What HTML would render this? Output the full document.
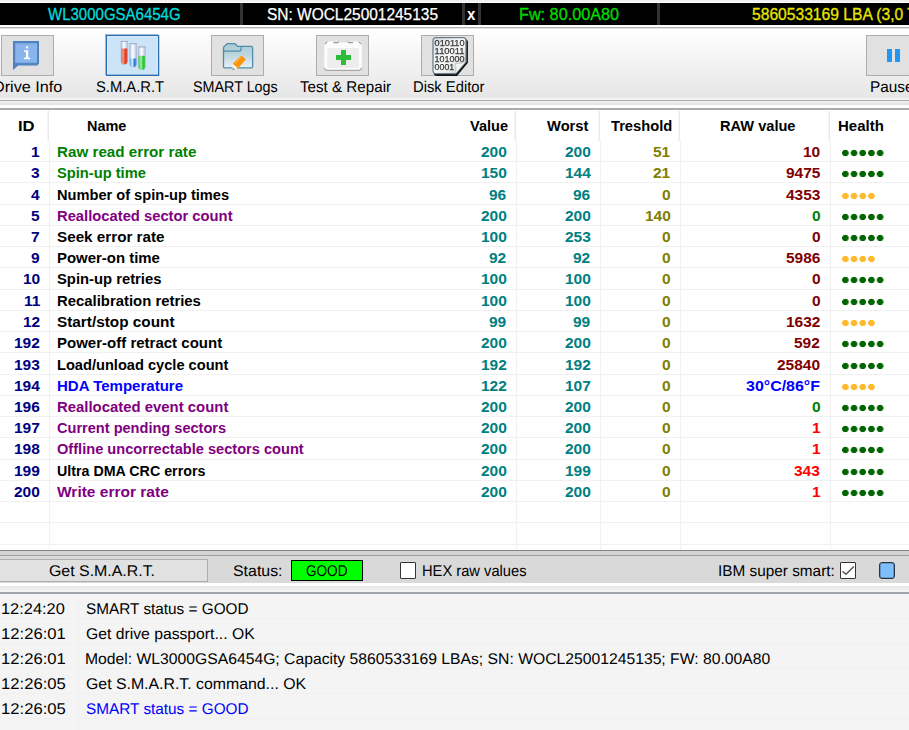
<!DOCTYPE html>
<html><head><meta charset="utf-8"><title>Victoria SMART</title>
<style>
html,body{margin:0;padding:0}
body{width:909px;height:730px;overflow:hidden;position:relative;background:#f0f0f0;font-family:"Liberation Sans",sans-serif}
#w{position:absolute;left:0;top:0;width:909px;height:730px;overflow:hidden}
#w>*{position:absolute}
.t{position:absolute;white-space:pre;line-height:20px;height:20px;transform-origin:0 0}
.g{text-rendering:geometricPrecision}
.r{position:absolute}
.sep{top:3px;height:22px;background:#333}
.btn{top:35px;width:51px;height:39px;background:#e1e1e1;border:1px solid #adadad}
.hs{top:111px;width:1px;height:30px;background:#e8e8e8;box-shadow:-1px 0 0 #f6f6f6}
.bs{top:141px;width:1px;height:409px;background:#f1f1f1}
.hl{left:0;width:909px;height:1px;background:#f1f1f1}
.ll{left:0;width:909px;height:1px;background:#f0f0f0}
.d{position:absolute;left:841.3px;height:8px;background-size:8.7px 8px;background-repeat:repeat-x}
svg{position:absolute;overflow:visible}
</style></head><body><div id="w">
<!-- top strip -->
<div class="r" style="left:0;top:2px;width:909px;height:1px;background:#fff"></div>
<div class="r" style="left:0;top:3px;width:909px;height:22px;background:#000"></div>
<div class="r" style="left:0;top:25px;width:909px;height:2px;background:#fff"></div>
<div class="r" style="left:0;top:27px;width:909px;height:1px;background:#b2b2b2"></div>
<div class="r" style="left:0;top:28px;width:909px;height:1px;background:#e3e3e3"></div>
<div class="r sep" style="left:240px;width:3px"></div>
<div class="r sep" style="left:462px;width:3px"></div>
<div class="r sep" style="left:478px;width:3px"></div>
<div class="r sep" style="left:657px;width:3px"></div>
<!-- toolbar -->
<div class="r" style="left:0;top:29px;width:909px;height:69px;background:linear-gradient(#ffffff,#e6e6e6)"></div>
<div class="r" style="left:0;top:98px;width:909px;height:2px;background:#f4f4f4"></div>
<div class="r" style="left:0;top:100px;width:909px;height:1px;background:#a8a8a8"></div>
<div class="r" style="left:0;top:101px;width:909px;height:4px;background:linear-gradient(#f2f2f2,#e0e0e0)"></div>
<div class="r" style="left:0;top:105px;width:909px;height:3px;background:#fff"></div>
<div class="r" style="left:0;top:108px;width:909px;height:2px;background:#a8acb0"></div>
<div class="r btn" style="left:1px"></div>
<div class="r btn" style="left:106px;background:#cce4f7;border-color:#2a6dae;box-shadow:-1px -1px 0 0 rgba(42,109,174,.45),1px 0 0 0 rgba(42,109,174,.25),inset 0 -1px 0 rgba(42,109,174,.4),inset 0 0 0 1px rgba(255,255,255,.25)"></div>
<div class="r btn" style="left:211px"></div>
<div class="r btn" style="left:316px"></div>
<div class="r btn" style="left:421px"></div>
<div class="r btn" style="left:866px"></div>
<!-- drive info bubble -->
<svg style="left:13px;top:41px" width="26" height="29" viewBox="0 0 26 29">
<path d="M0 0H26V22.6L24.4 24.6H5.2L0 29Z" fill="#4a7dbc"/>
<path d="M0.6 0.6H25.4V22L24 24H5L0.6 27.8Z" fill="#5384c4"/>
<path d="M2.1 2.2H24V21.8H2.1Z" fill="#8ab4ec"/>
<path d="M2.1 2.2H24V3.2H3.1V21.8H2.1Z" fill="#7aa6e2"/>
<g fill="#fff"><rect x="13" y="5.2" width="2.2" height="2.2"/><rect x="13" y="9.3" width="2.2" height="8.5"/><rect x="11" y="9.3" width="2.2" height="1.5"/><rect x="10.8" y="16.6" width="6.4" height="1.6"/></g>
</svg>
<!-- test tubes -->
<svg style="left:118px;top:39px" width="32" height="34" viewBox="0 0 32 34">
<defs>
<linearGradient id="gl" x1="0" x2="1" y1="0" y2="0"><stop offset="0" stop-color="#b0bcd8"/><stop offset=".25" stop-color="#dde5f2"/><stop offset=".45" stop-color="#ffffff"/><stop offset=".62" stop-color="#e6ecf6"/><stop offset="1" stop-color="#b4c0da"/></linearGradient>
<linearGradient id="rd" x1="0" x2="1" y1="0" y2="0"><stop offset="0" stop-color="#e8705e"/><stop offset=".3" stop-color="#f49684"/><stop offset=".7" stop-color="#e2391f"/><stop offset="1" stop-color="#dc5a48"/></linearGradient>
<linearGradient id="bl" x1="0" x2="1" y1="0" y2="0"><stop offset="0" stop-color="#6aa6e4"/><stop offset=".4" stop-color="#d4e6f8"/><stop offset=".7" stop-color="#1f7fe0"/><stop offset="1" stop-color="#5a9ae0"/></linearGradient>
<linearGradient id="gr" x1="0" x2="1" y1="0" y2="0"><stop offset="0" stop-color="#46cc4e"/><stop offset=".4" stop-color="#a4eca6"/><stop offset=".72" stop-color="#1fc82a"/><stop offset="1" stop-color="#52c858"/></linearGradient>
</defs>
<path d="M3 2.4H9.6V22.2a3.3 3.3 0 0 1-6.6 0Z" fill="url(#gl)" stroke="#a9b4cf" stroke-width=".6"/>
<path d="M3.2 9.4H9.4V22.2a3.1 3.1 0 0 1-6.2 0Z" fill="url(#rd)"/>
<path d="M2.8 2.5H9.8" stroke="#9fa9c6" stroke-width=".9"/>
<path d="M11.6 4.6H18.6V24.8a3.5 3.5 0 0 1-7 0Z" fill="url(#gl)" stroke="#a9b4cf" stroke-width=".6"/>
<path d="M11.8 19.4H18.4V24.8a3.3 3.3 0 0 1-6.6 0Z" fill="url(#bl)"/>
<path d="M11.4 4.7H18.8" stroke="#9fa9c6" stroke-width=".9"/>
<path d="M20.3 7.8H27.3V27.4a3.5 3.5 0 0 1-7 0Z" fill="url(#gl)" stroke="#a9b4cf" stroke-width=".6"/>
<path d="M20.5 16.8H27.1V27.4a3.3 3.3 0 0 1-6.6 0Z" fill="url(#gr)"/>
<path d="M20.1 7.9H27.5" stroke="#9fa9c6" stroke-width=".9"/>
</svg>
<!-- folder with pencil -->
<svg style="left:222px;top:42px" width="32" height="30" viewBox="0 0 32 30">
<defs><linearGradient id="fo" x1="0" x2="0" y1="0" y2="1"><stop offset="0" stop-color="#a9c9d5"/><stop offset=".45" stop-color="#bcd5de"/><stop offset="1" stop-color="#e9f2f5"/></linearGradient></defs>
<path d="M1.5 5.2L5.2 1.6H13L15.6 4.4H29.3Q30.6 4.4 30.6 5.7V24.6Q30.6 25.8 29.3 25.8H2.8Q1.5 25.8 1.5 24.6Z" fill="url(#fo)" stroke="#4f8eaa" stroke-width="1.3" stroke-linejoin="round"/>
<path d="M1.8 9.2H17.2Q19 9.2 19 7.2V4.6" fill="none" stroke="#4f8eaa" stroke-width="1.2"/>
<path d="M11.8 21.6L16 25.2L10.2 28.8Z" fill="#f2f2f2" stroke="#fff" stroke-width=".8"/>
<path d="M10.2 28.8L10.9 25.6L13 27.2Z" fill="#8a8a8a"/>
<path d="M19.4 14.5L22.8 17.3L16 25.2L11.8 21.6Z" fill="#ff9408" stroke="#ff9408" stroke-width="1.6" stroke-linejoin="round"/>
<path d="M18.6 15.2L13 21.6" stroke="#ffb347" stroke-width="1.2" fill="none"/>
</svg>
<!-- medkit -->
<svg style="left:323px;top:40px" width="40" height="32" viewBox="0 0 40 32">
<rect x="1.2" y="1.6" width="37.6" height="28.8" rx="3" fill="#fcfcfc"/>
<rect x="4.4" y="8" width="31.4" height="20" rx="1.5" fill="#ededed"/>
<path d="M1.4 27.8Q1.6 30.4 4.2 30.4H35.8Q38.4 30.4 38.6 27.8" fill="none" stroke="#a9a9a9" stroke-width="1.2"/>
<path d="M1.6 4.2L4.4 1.6M10.4 2.6H14.6L15.8 1.4M24.6 1.4L25.8 2.6H30M35.6 1.6L38.4 4.2" fill="none" stroke="#9a9a9a" stroke-width="1.1"/>
<path d="M16 1.8H24.4" stroke="#dcdcdc" stroke-width="1.2"/>
<path d="M18 10H23V15H28V20H23V25H18V20H13V15H18Z" fill="#2dbd3b"/>
</svg>
<!-- disk editor -->
<svg style="left:431px;top:36px;will-change:transform" width="40" height="41" viewBox="0 0 40 41">
<defs><linearGradient id="pg" x1="0" x2="1" y1="0" y2="1"><stop offset="0" stop-color="#d8dadc"/><stop offset=".5" stop-color="#fbfbfb"/><stop offset="1" stop-color="#c9cbcd"/></linearGradient></defs>
<path d="M5.6 3.2H33.8Q36.9 3.2 36.9 6.2V26.8L26 39.9H5.6Q2.6 39.9 2.6 36.6V6.2Q2.6 3.2 5.6 3.2Z" fill="#111" />
<path d="M5 1.6H32Q35 1.6 35 4.6V25.6L24.6 37.6H5Q2 37.6 2 34.6V4.6Q2 1.6 5 1.6Z" fill="url(#pg)" stroke="#6f7d8a" stroke-width="1.3"/>
<path d="M24.6 37.6Q25.4 30.6 24.4 27.4Q30 28.2 35 25.6Z" fill="#f4f4f4" stroke="#9aa" stroke-width=".5"/>
<g font-family="Liberation Sans, sans-serif" font-size="8.6" font-weight="400" fill="#2a2a2a" stroke="#2a2a2a" stroke-width=".25" style="opacity:.92">
<text x="3.6" y="10.2" textLength="30" lengthAdjust="spacingAndGlyphs">010110</text>
<text x="3.6" y="18" textLength="30" lengthAdjust="spacingAndGlyphs">110011</text>
<text x="3.6" y="25.8" textLength="30" lengthAdjust="spacingAndGlyphs">101000</text>
<text x="3.6" y="33.6" textLength="19.6" lengthAdjust="spacingAndGlyphs">0001</text>
</g>
</svg>
<!-- pause -->
<div class="r" style="left:887px;top:49px;width:5px;height:13px;background:#2196f3"></div>
<div class="r" style="left:895px;top:49px;width:5px;height:13px;background:#2196f3"></div>

<!-- table -->
<div class="r" style="left:0;top:110px;width:909px;height:440px;background:#fff"></div>
<div class="r hs" style="left:48px"></div>
<div class="r bs" style="left:49px"></div>
<div class="r hs" style="left:515px"></div>
<div class="r bs" style="left:516px"></div>
<div class="r hs" style="left:599px"></div>
<div class="r bs" style="left:600px"></div>
<div class="r hs" style="left:679px"></div>
<div class="r bs" style="left:680px"></div>
<div class="r hs" style="left:829px"></div>
<div class="r bs" style="left:830px"></div>
<div class="r hl" style="top:161px"></div>
<div class="r hl" style="top:182px"></div>
<div class="r hl" style="top:204px"></div>
<div class="r hl" style="top:225px"></div>
<div class="r hl" style="top:246px"></div>
<div class="r hl" style="top:267px"></div>
<div class="r hl" style="top:289px"></div>
<div class="r hl" style="top:310px"></div>
<div class="r hl" style="top:331px"></div>
<div class="r hl" style="top:352px"></div>
<div class="r hl" style="top:374px"></div>
<div class="r hl" style="top:395px"></div>
<div class="r hl" style="top:416px"></div>
<div class="r hl" style="top:437px"></div>
<div class="r hl" style="top:459px"></div>
<div class="r hl" style="top:480px"></div>
<div class="r hl" style="top:501px"></div>
<div class="r hl" style="top:522px"></div>
<div class="r hl" style="top:544px"></div>
<i class="d" style="top:148.6px;width:43.5px;background-image:radial-gradient(circle at 4.35px 4px,#006400 2.9px,transparent 3.6px)"></i>
<i class="d" style="top:169.6px;width:43.5px;background-image:radial-gradient(circle at 4.35px 4px,#006400 2.9px,transparent 3.6px)"></i>
<i class="d" style="top:191.6px;width:34.8px;background-image:radial-gradient(circle at 4.35px 4px,#ffb92e 2.9px,transparent 3.6px)"></i>
<i class="d" style="top:212.6px;width:43.5px;background-image:radial-gradient(circle at 4.35px 4px,#006400 2.9px,transparent 3.6px)"></i>
<i class="d" style="top:233.6px;width:43.5px;background-image:radial-gradient(circle at 4.35px 4px,#006400 2.9px,transparent 3.6px)"></i>
<i class="d" style="top:254.6px;width:34.8px;background-image:radial-gradient(circle at 4.35px 4px,#ffb92e 2.9px,transparent 3.6px)"></i>
<i class="d" style="top:275.6px;width:43.5px;background-image:radial-gradient(circle at 4.35px 4px,#006400 2.9px,transparent 3.6px)"></i>
<i class="d" style="top:297.6px;width:43.5px;background-image:radial-gradient(circle at 4.35px 4px,#006400 2.9px,transparent 3.6px)"></i>
<i class="d" style="top:318.6px;width:34.8px;background-image:radial-gradient(circle at 4.35px 4px,#ffb92e 2.9px,transparent 3.6px)"></i>
<i class="d" style="top:339.6px;width:43.5px;background-image:radial-gradient(circle at 4.35px 4px,#006400 2.9px,transparent 3.6px)"></i>
<i class="d" style="top:361.6px;width:43.5px;background-image:radial-gradient(circle at 4.35px 4px,#006400 2.9px,transparent 3.6px)"></i>
<i class="d" style="top:382.6px;width:34.8px;background-image:radial-gradient(circle at 4.35px 4px,#ffb92e 2.9px,transparent 3.6px)"></i>
<i class="d" style="top:403.6px;width:43.5px;background-image:radial-gradient(circle at 4.35px 4px,#006400 2.9px,transparent 3.6px)"></i>
<i class="d" style="top:424.6px;width:43.5px;background-image:radial-gradient(circle at 4.35px 4px,#006400 2.9px,transparent 3.6px)"></i>
<i class="d" style="top:445.6px;width:43.5px;background-image:radial-gradient(circle at 4.35px 4px,#006400 2.9px,transparent 3.6px)"></i>
<i class="d" style="top:467.6px;width:43.5px;background-image:radial-gradient(circle at 4.35px 4px,#006400 2.9px,transparent 3.6px)"></i>
<i class="d" style="top:488.6px;width:43.5px;background-image:radial-gradient(circle at 4.35px 4px,#006400 2.9px,transparent 3.6px)"></i>
<!-- bottom panel -->
<div class="r" style="left:0;top:550px;width:909px;height:1px;background:#7f858c"></div>
<div class="r" style="left:0;top:551px;width:909px;height:4px;background:#d4d4d4"></div>
<div class="r" style="left:0;top:555px;width:909px;height:1px;background:#a0a0a0"></div>
<div class="r" style="left:0;top:556px;width:909px;height:27px;background:#d9d9d9"></div>
<div class="r" style="left:0;top:583px;width:909px;height:3px;background:#fff"></div>
<div class="r" style="left:0;top:586px;width:909px;height:6px;background:linear-gradient(#e7e7e7,#f3f3f3)"></div>
<div class="r" style="left:0;top:592px;width:909px;height:2px;background:#a0a5ab"></div>
<div class="r" style="left:-1px;top:559px;width:207px;height:21px;background:#e1e1e1;border:1px solid #adadad"></div>
<div class="r" style="left:291px;top:560px;width:70px;height:19px;background:#00ff00;border:1px solid #000"></div>
<div class="r" style="left:400px;top:562px;width:14px;height:15px;background:#fff;border:1px solid #333;border-radius:1px"></div>
<div class="r" style="left:840px;top:562px;width:14px;height:15px;background:#fff;border:1px solid #333;border-radius:1px"></div>
<svg style="left:840px;top:562px" width="16" height="17" viewBox="0 0 16 17"><path d="M2.4 9.2 L6 12.2 L13.8 4.4" fill="none" stroke="#555" stroke-width="1.4"/></svg>
<div class="r" style="left:879px;top:562px;width:14px;height:15px;background:#80bfff;border:1px solid #2a3540;border-radius:3px;box-shadow:inset 0 0 0 .6px rgba(42,53,64,.55)"></div>
<!-- log -->
<div class="r" style="left:0;top:594px;width:909px;height:136px;background:#f4f4f4"></div>
<div class="r ll" style="top:618px"></div>
<div class="r ll" style="top:643px"></div>
<div class="r ll" style="top:668px"></div>
<div class="r ll" style="top:693px"></div>
<div class="r ll" style="top:718px"></div>
<div class="r" style="left:78px;top:594px;width:1px;height:136px;background:#f0f0f0"></div>
<span class="t" style="left:47.90px;top:5px;font-size:16px;font-weight:400;color:#00dcdc;-webkit-text-stroke:0.3px #00dcdc;transform:scaleX(0.9377)">WL3000GSA6454G</span>
<span class="t" style="left:267.30px;top:5px;font-size:16px;font-weight:400;color:#ffffff;-webkit-text-stroke:0.25px #ffffff;transform:scaleX(0.9661)">SN: WOCL25001245135</span>
<span class="t" style="left:467.20px;top:5px;font-size:17px;font-weight:700;color:#ffffff;transform:scaleX(0.8800)">x</span>
<span class="t" style="left:519.19px;top:5px;font-size:16px;font-weight:400;color:#00dc00;-webkit-text-stroke:0.3px #00dc00;transform:scaleX(1.0130)">Fw: 80.00A80</span>
<span class="t" style="left:751.50px;top:5px;font-size:16px;font-weight:400;color:#e6e600;-webkit-text-stroke:0.3px #e6e600;transform:scaleX(0.9770)">5860533169 LBA (3,0 Tb)</span>
<span class="t g" style="left:-7.34px;top:78px;font-size:15.5px;font-weight:400;color:#000;transform:scaleX(1.0447)">Drive Info</span>
<span class="t g" style="left:95.60px;top:78px;font-size:15.5px;font-weight:400;color:#000;transform:scaleX(0.9527)">S.M.A.R.T</span>
<span class="t g" style="left:193.40px;top:78px;font-size:15.5px;font-weight:400;color:#000;transform:scaleX(0.9247)">SMART Logs</span>
<span class="t g" style="left:300.40px;top:78px;font-size:15.5px;font-weight:400;color:#000;transform:scaleX(0.9787)">Test &amp; Repair</span>
<span class="t g" style="left:413.25px;top:78px;font-size:15.5px;font-weight:400;color:#000;transform:scaleX(0.9543)">Disk Editor</span>
<span class="t g" style="left:870.41px;top:78px;font-size:15.5px;font-weight:400;color:#000;transform:scaleX(0.9922)">Pause</span>
<span class="t" style="left:17.80px;top:116px;font-size:14px;font-weight:700;color:#000;transform:scaleX(1.1879)">ID</span>
<span class="t" style="left:87.10px;top:116px;font-size:14px;font-weight:700;color:#000;transform:scaleX(1.0327)">Name</span>
<span class="t" style="left:469.70px;top:116px;font-size:14px;font-weight:700;color:#000;transform:scaleX(1.0382)">Value</span>
<span class="t" style="left:546.70px;top:116px;font-size:14px;font-weight:700;color:#000;transform:scaleX(1.0516)">Worst</span>
<span class="t" style="left:611.00px;top:116px;font-size:14px;font-weight:700;color:#000;transform:scaleX(1.0486)">Treshold</span>
<span class="t" style="left:720.00px;top:116px;font-size:14px;font-weight:700;color:#000;transform:scaleX(1.0432)">RAW value</span>
<span class="t" style="left:837.80px;top:116px;font-size:14px;font-weight:700;color:#000;transform:scaleX(1.0702)">Health</span>
<span class="t" style="left:31.38px;top:142px;font-size:14px;font-weight:700;color:#000080;transform:scaleX(1.1074)">1</span>
<span class="t" style="left:57.40px;top:142px;font-size:14px;font-weight:700;color:#008000;transform:scaleX(1.0855)">Raw read error rate</span>
<span class="t" style="left:480.73px;top:142px;font-size:14px;font-weight:700;color:#008080;transform:scaleX(1.1074)">200</span>
<span class="t" style="left:564.73px;top:142px;font-size:14px;font-weight:700;color:#008080;transform:scaleX(1.1074)">200</span>
<span class="t" style="left:653.26px;top:142px;font-size:14px;font-weight:700;color:#808000;transform:scaleX(1.1074)">51</span>
<span class="t" style="left:803.06px;top:142px;font-size:14px;font-weight:700;color:#800000;transform:scaleX(1.1074)">10</span>
<span class="t" style="left:31.38px;top:163px;font-size:14px;font-weight:700;color:#000080;transform:scaleX(1.1074)">3</span>
<span class="t" style="left:57.40px;top:163px;font-size:14px;font-weight:700;color:#008000;transform:scaleX(1.0484)">Spin-up time</span>
<span class="t" style="left:480.73px;top:163px;font-size:14px;font-weight:700;color:#008080;transform:scaleX(1.1074)">150</span>
<span class="t" style="left:564.73px;top:163px;font-size:14px;font-weight:700;color:#008080;transform:scaleX(1.1074)">144</span>
<span class="t" style="left:653.26px;top:163px;font-size:14px;font-weight:700;color:#808000;transform:scaleX(1.1074)">21</span>
<span class="t" style="left:785.81px;top:163px;font-size:14px;font-weight:700;color:#800000;transform:scaleX(1.1074)">9475</span>
<span class="t" style="left:31.38px;top:185px;font-size:14px;font-weight:700;color:#000080;transform:scaleX(1.1074)">4</span>
<span class="t" style="left:57.40px;top:185px;font-size:14px;font-weight:700;color:#000000;transform:scaleX(1.0435)">Number of spin-up times</span>
<span class="t" style="left:489.36px;top:185px;font-size:14px;font-weight:700;color:#008080;transform:scaleX(1.1074)">96</span>
<span class="t" style="left:573.36px;top:185px;font-size:14px;font-weight:700;color:#008080;transform:scaleX(1.1074)">96</span>
<span class="t" style="left:661.88px;top:185px;font-size:14px;font-weight:700;color:#808000;transform:scaleX(1.1074)">0</span>
<span class="t" style="left:785.81px;top:185px;font-size:14px;font-weight:700;color:#800000;transform:scaleX(1.1074)">4353</span>
<span class="t" style="left:31.38px;top:206px;font-size:14px;font-weight:700;color:#000080;transform:scaleX(1.1074)">5</span>
<span class="t" style="left:57.40px;top:206px;font-size:14px;font-weight:700;color:#800080;transform:scaleX(1.0544)">Reallocated sector count</span>
<span class="t" style="left:480.73px;top:206px;font-size:14px;font-weight:700;color:#008080;transform:scaleX(1.1074)">200</span>
<span class="t" style="left:564.73px;top:206px;font-size:14px;font-weight:700;color:#008080;transform:scaleX(1.1074)">200</span>
<span class="t" style="left:644.63px;top:206px;font-size:14px;font-weight:700;color:#808000;transform:scaleX(1.1074)">140</span>
<span class="t" style="left:811.68px;top:206px;font-size:14px;font-weight:700;color:#008000;transform:scaleX(1.1074)">0</span>
<span class="t" style="left:31.38px;top:227px;font-size:14px;font-weight:700;color:#000080;transform:scaleX(1.1074)">7</span>
<span class="t" style="left:57.40px;top:227px;font-size:14px;font-weight:700;color:#000000;transform:scaleX(1.0883)">Seek error rate</span>
<span class="t" style="left:480.73px;top:227px;font-size:14px;font-weight:700;color:#008080;transform:scaleX(1.1074)">100</span>
<span class="t" style="left:564.73px;top:227px;font-size:14px;font-weight:700;color:#008080;transform:scaleX(1.1074)">253</span>
<span class="t" style="left:661.88px;top:227px;font-size:14px;font-weight:700;color:#808000;transform:scaleX(1.1074)">0</span>
<span class="t" style="left:811.68px;top:227px;font-size:14px;font-weight:700;color:#800000;transform:scaleX(1.1074)">0</span>
<span class="t" style="left:31.38px;top:248px;font-size:14px;font-weight:700;color:#000080;transform:scaleX(1.1074)">9</span>
<span class="t" style="left:57.40px;top:248px;font-size:14px;font-weight:700;color:#000000;transform:scaleX(1.0665)">Power-on time</span>
<span class="t" style="left:489.36px;top:248px;font-size:14px;font-weight:700;color:#008080;transform:scaleX(1.1074)">92</span>
<span class="t" style="left:573.36px;top:248px;font-size:14px;font-weight:700;color:#008080;transform:scaleX(1.1074)">92</span>
<span class="t" style="left:661.88px;top:248px;font-size:14px;font-weight:700;color:#808000;transform:scaleX(1.1074)">0</span>
<span class="t" style="left:785.81px;top:248px;font-size:14px;font-weight:700;color:#800000;transform:scaleX(1.1074)">5986</span>
<span class="t" style="left:22.76px;top:269px;font-size:14px;font-weight:700;color:#000080;transform:scaleX(1.1074)">10</span>
<span class="t" style="left:57.40px;top:269px;font-size:14px;font-weight:700;color:#000000;transform:scaleX(1.0565)">Spin-up retries</span>
<span class="t" style="left:480.73px;top:269px;font-size:14px;font-weight:700;color:#008080;transform:scaleX(1.1074)">100</span>
<span class="t" style="left:564.73px;top:269px;font-size:14px;font-weight:700;color:#008080;transform:scaleX(1.1074)">100</span>
<span class="t" style="left:661.88px;top:269px;font-size:14px;font-weight:700;color:#808000;transform:scaleX(1.1074)">0</span>
<span class="t" style="left:811.68px;top:269px;font-size:14px;font-weight:700;color:#800000;transform:scaleX(1.1074)">0</span>
<span class="t" style="left:23.61px;top:291px;font-size:14px;font-weight:700;color:#000080;transform:scaleX(1.1074)">11</span>
<span class="t" style="left:57.40px;top:291px;font-size:14px;font-weight:700;color:#000000;transform:scaleX(1.0627)">Recalibration retries</span>
<span class="t" style="left:480.73px;top:291px;font-size:14px;font-weight:700;color:#008080;transform:scaleX(1.1074)">100</span>
<span class="t" style="left:564.73px;top:291px;font-size:14px;font-weight:700;color:#008080;transform:scaleX(1.1074)">100</span>
<span class="t" style="left:661.88px;top:291px;font-size:14px;font-weight:700;color:#808000;transform:scaleX(1.1074)">0</span>
<span class="t" style="left:811.68px;top:291px;font-size:14px;font-weight:700;color:#800000;transform:scaleX(1.1074)">0</span>
<span class="t" style="left:22.76px;top:312px;font-size:14px;font-weight:700;color:#000080;transform:scaleX(1.1074)">12</span>
<span class="t" style="left:57.40px;top:312px;font-size:14px;font-weight:700;color:#000000;transform:scaleX(1.0950)">Start/stop count</span>
<span class="t" style="left:489.36px;top:312px;font-size:14px;font-weight:700;color:#008080;transform:scaleX(1.1074)">99</span>
<span class="t" style="left:573.36px;top:312px;font-size:14px;font-weight:700;color:#008080;transform:scaleX(1.1074)">99</span>
<span class="t" style="left:661.88px;top:312px;font-size:14px;font-weight:700;color:#808000;transform:scaleX(1.1074)">0</span>
<span class="t" style="left:785.81px;top:312px;font-size:14px;font-weight:700;color:#800000;transform:scaleX(1.1074)">1632</span>
<span class="t" style="left:14.13px;top:333px;font-size:14px;font-weight:700;color:#000080;transform:scaleX(1.1074)">192</span>
<span class="t" style="left:57.40px;top:333px;font-size:14px;font-weight:700;color:#000000;transform:scaleX(1.0722)">Power-off retract count</span>
<span class="t" style="left:480.73px;top:333px;font-size:14px;font-weight:700;color:#008080;transform:scaleX(1.1074)">200</span>
<span class="t" style="left:564.73px;top:333px;font-size:14px;font-weight:700;color:#008080;transform:scaleX(1.1074)">200</span>
<span class="t" style="left:661.88px;top:333px;font-size:14px;font-weight:700;color:#808000;transform:scaleX(1.1074)">0</span>
<span class="t" style="left:794.43px;top:333px;font-size:14px;font-weight:700;color:#800000;transform:scaleX(1.1074)">592</span>
<span class="t" style="left:14.13px;top:355px;font-size:14px;font-weight:700;color:#000080;transform:scaleX(1.1074)">193</span>
<span class="t" style="left:57.40px;top:355px;font-size:14px;font-weight:700;color:#000000;transform:scaleX(1.0440)">Load/unload cycle count</span>
<span class="t" style="left:480.73px;top:355px;font-size:14px;font-weight:700;color:#008080;transform:scaleX(1.1074)">192</span>
<span class="t" style="left:564.73px;top:355px;font-size:14px;font-weight:700;color:#008080;transform:scaleX(1.1074)">192</span>
<span class="t" style="left:661.88px;top:355px;font-size:14px;font-weight:700;color:#808000;transform:scaleX(1.1074)">0</span>
<span class="t" style="left:777.19px;top:355px;font-size:14px;font-weight:700;color:#800000;transform:scaleX(1.1074)">25840</span>
<span class="t" style="left:14.13px;top:376px;font-size:14px;font-weight:700;color:#000080;transform:scaleX(1.1074)">194</span>
<span class="t" style="left:57.40px;top:376px;font-size:14px;font-weight:700;color:#0000ff;transform:scaleX(1.0727)">HDA Temperature</span>
<span class="t" style="left:480.73px;top:376px;font-size:14px;font-weight:700;color:#008080;transform:scaleX(1.1074)">122</span>
<span class="t" style="left:564.73px;top:376px;font-size:14px;font-weight:700;color:#008080;transform:scaleX(1.1074)">107</span>
<span class="t" style="left:661.88px;top:376px;font-size:14px;font-weight:700;color:#808000;transform:scaleX(1.1074)">0</span>
<span class="t" style="left:745.50px;top:376px;font-size:14px;font-weight:700;color:#0000ff;transform:scaleX(1.1402)">30°C/86°F</span>
<span class="t" style="left:14.13px;top:397px;font-size:14px;font-weight:700;color:#000080;transform:scaleX(1.1074)">196</span>
<span class="t" style="left:57.40px;top:397px;font-size:14px;font-weight:700;color:#800080;transform:scaleX(1.0640)">Reallocated event count</span>
<span class="t" style="left:480.73px;top:397px;font-size:14px;font-weight:700;color:#008080;transform:scaleX(1.1074)">200</span>
<span class="t" style="left:564.73px;top:397px;font-size:14px;font-weight:700;color:#008080;transform:scaleX(1.1074)">200</span>
<span class="t" style="left:661.88px;top:397px;font-size:14px;font-weight:700;color:#808000;transform:scaleX(1.1074)">0</span>
<span class="t" style="left:811.68px;top:397px;font-size:14px;font-weight:700;color:#008000;transform:scaleX(1.1074)">0</span>
<span class="t" style="left:14.13px;top:418px;font-size:14px;font-weight:700;color:#000080;transform:scaleX(1.1074)">197</span>
<span class="t" style="left:57.40px;top:418px;font-size:14px;font-weight:700;color:#800080;transform:scaleX(1.0400)">Current pending sectors</span>
<span class="t" style="left:480.73px;top:418px;font-size:14px;font-weight:700;color:#008080;transform:scaleX(1.1074)">200</span>
<span class="t" style="left:564.73px;top:418px;font-size:14px;font-weight:700;color:#008080;transform:scaleX(1.1074)">200</span>
<span class="t" style="left:661.88px;top:418px;font-size:14px;font-weight:700;color:#808000;transform:scaleX(1.1074)">0</span>
<span class="t" style="left:811.68px;top:418px;font-size:14px;font-weight:700;color:#ff0000;transform:scaleX(1.1074)">1</span>
<span class="t" style="left:14.13px;top:439px;font-size:14px;font-weight:700;color:#000080;transform:scaleX(1.1074)">198</span>
<span class="t" style="left:57.40px;top:439px;font-size:14px;font-weight:700;color:#800080;transform:scaleX(1.0433)">Offline uncorrectable sectors count</span>
<span class="t" style="left:480.73px;top:439px;font-size:14px;font-weight:700;color:#008080;transform:scaleX(1.1074)">200</span>
<span class="t" style="left:564.73px;top:439px;font-size:14px;font-weight:700;color:#008080;transform:scaleX(1.1074)">200</span>
<span class="t" style="left:661.88px;top:439px;font-size:14px;font-weight:700;color:#808000;transform:scaleX(1.1074)">0</span>
<span class="t" style="left:811.68px;top:439px;font-size:14px;font-weight:700;color:#ff0000;transform:scaleX(1.1074)">1</span>
<span class="t" style="left:14.13px;top:461px;font-size:14px;font-weight:700;color:#000080;transform:scaleX(1.1074)">199</span>
<span class="t" style="left:57.40px;top:461px;font-size:14px;font-weight:700;color:#000000;transform:scaleX(1.0180)">Ultra DMA CRC errors</span>
<span class="t" style="left:480.73px;top:461px;font-size:14px;font-weight:700;color:#008080;transform:scaleX(1.1074)">200</span>
<span class="t" style="left:564.73px;top:461px;font-size:14px;font-weight:700;color:#008080;transform:scaleX(1.1074)">199</span>
<span class="t" style="left:661.88px;top:461px;font-size:14px;font-weight:700;color:#808000;transform:scaleX(1.1074)">0</span>
<span class="t" style="left:794.43px;top:461px;font-size:14px;font-weight:700;color:#ff0000;transform:scaleX(1.1074)">343</span>
<span class="t" style="left:14.13px;top:482px;font-size:14px;font-weight:700;color:#000080;transform:scaleX(1.1074)">200</span>
<span class="t" style="left:57.40px;top:482px;font-size:14px;font-weight:700;color:#800080;transform:scaleX(1.1078)">Write error rate</span>
<span class="t" style="left:480.73px;top:482px;font-size:14px;font-weight:700;color:#008080;transform:scaleX(1.1074)">200</span>
<span class="t" style="left:564.73px;top:482px;font-size:14px;font-weight:700;color:#008080;transform:scaleX(1.1074)">200</span>
<span class="t" style="left:661.88px;top:482px;font-size:14px;font-weight:700;color:#808000;transform:scaleX(1.1074)">0</span>
<span class="t" style="left:811.68px;top:482px;font-size:14px;font-weight:700;color:#ff0000;transform:scaleX(1.1074)">1</span>
<span class="t g" style="left:48.60px;top:562px;font-size:15.5px;font-weight:400;color:#000;transform:scaleX(1.0260)">Get S.M.A.R.T.</span>
<span class="t g" style="left:233.40px;top:562px;font-size:15.5px;font-weight:400;color:#000;transform:scaleX(1.0268)">Status:</span>
<span class="t g" style="left:306.40px;top:562px;font-size:15.5px;font-weight:400;color:#000;transform:scaleX(0.8756)">GOOD</span>
<span class="t g" style="left:421.55px;top:562px;font-size:15.5px;font-weight:400;color:#000;transform:scaleX(0.9478)">HEX raw values</span>
<span class="t g" style="left:717.91px;top:562px;font-size:15.5px;font-weight:400;color:#000;transform:scaleX(0.9897)">IBM super smart:</span>
<span class="t g" style="left:0.74px;top:600px;font-size:15.5px;font-weight:400;color:#000;transform:scaleX(1.0567)">12:24:20</span>
<span class="t g" style="left:85.80px;top:600px;font-size:15.5px;font-weight:400;color:#000;transform:scaleX(0.9893)">SMART status = GOOD</span>
<span class="t g" style="left:0.73px;top:625px;font-size:15.5px;font-weight:400;color:#000;transform:scaleX(1.0747)">12:26:01</span>
<span class="t g" style="left:85.80px;top:625px;font-size:15.5px;font-weight:400;color:#000;transform:scaleX(1.0142)">Get drive passport... OK</span>
<span class="t g" style="left:0.73px;top:650px;font-size:15.5px;font-weight:400;color:#000;transform:scaleX(1.0747)">12:26:01</span>
<span class="t g" style="left:85.39px;top:650px;font-size:15.5px;font-weight:400;color:#000;transform:scaleX(1.0135)">Model: WL3000GSA6454G; Capacity 5860533169 LBAs; SN: WOCL25001245135; FW: 80.00A80</span>
<span class="t g" style="left:0.73px;top:675px;font-size:15.5px;font-weight:400;color:#000;transform:scaleX(1.0747)">12:26:05</span>
<span class="t g" style="left:85.80px;top:675px;font-size:15.5px;font-weight:400;color:#000;transform:scaleX(1.0222)">Get S.M.A.R.T. command... OK</span>
<span class="t g" style="left:0.73px;top:700px;font-size:15.5px;font-weight:400;color:#000;transform:scaleX(1.0747)">12:26:05</span>
<span class="t g" style="left:85.80px;top:700px;font-size:15.5px;font-weight:400;color:#0000ff;transform:scaleX(0.9893)">SMART status = GOOD</span>
</div></body></html>
